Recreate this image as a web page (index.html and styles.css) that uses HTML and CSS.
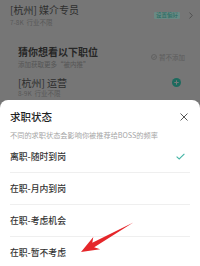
FILE: index.html
```html
<!DOCTYPE html>
<html lang="zh">
<head>
<meta charset="utf-8">
<link rel="stylesheet" href="styles.css">
</head>
<body>
<div class="screen">
  <div class="top">
    <div class="job">
      <div class="job-main">
        <div class="job-title">[杭州] 媒介专员</div>
        <div class="job-sub">7-8K&nbsp; 行业不限</div>
      </div>
      <span class="badge">设置偏好</span>
      <svg class="chev" width="4" height="7" viewBox="0 0 4 7"><polyline points="0.5,0.5 3.3,3.5 0.5,6.5" fill="none" stroke="#4e4e4e" stroke-width="0.9"/></svg>
    </div>
    <div class="guess">
      <div class="guess-head">
        <div>
          <div class="guess-title">猜你想看以下职位</div>
          <div class="guess-sub">添加获取更多“被内推”</div>
        </div>
        <div class="skip">
          <svg width="6" height="6" viewBox="0 0 6 6"><circle cx="3" cy="3" r="2.5" fill="none" stroke="#5a5a5a" stroke-width="0.7"/><polyline points="1.7,3.1 2.7,4 4.3,2.1" fill="none" stroke="#5a5a5a" stroke-width="0.7"/></svg>
          <span>暂不添加</span>
        </div>
      </div>
      <div class="rec">
        <div class="rec-title">[杭州] 运营</div>
        <svg class="plus" width="9" height="9" viewBox="0 0 9 9"><circle cx="4.5" cy="4.5" r="4.5" fill="#1d6a5e"/><path d="M4.5 2.3v4.4M2.3 4.5h4.4" stroke="#7a7a7a" stroke-width="1"/></svg>
      </div>
      <div class="rec-sub">8-9K&nbsp; 行业不限</div>
    </div>
  </div>
  <div class="sheet">
    <div class="sheet-head">
      <div class="sheet-title">求职状态</div>
      <svg class="close" width="8" height="8" viewBox="0 0 8 8"><path d="M0.5 0.5L7.5 7.5M7.5 0.5L0.5 7.5" stroke="#444" stroke-width="0.9"/></svg>
    </div>
    <div class="sheet-sub">不同的求职状态会影响你被推荐给BOSS的频率</div>
    <ul class="options">
      <li class="opt">
        <span>离职-随时到岗</span>
        <svg class="check" width="9" height="7" viewBox="0 0 9 7"><polyline points="0.6,3.6 3.2,6 8.4,0.8" fill="none" stroke="#45b5a6" stroke-width="1.1"/></svg>
      </li>
      <li class="opt"><span>在职-月内到岗</span></li>
      <li class="opt"><span>在职-考虑机会</span></li>
      <li class="opt"><span>在职-暂不考虑</span></li>
    </ul>
  </div>
  <svg class="arrow" width="200" height="266" viewBox="0 0 200 266">
    <polygon points="81,252 93.3,237.1 92.3,242.8 133.3,222.6 94.2,247.2 100.1,249.3" fill="#e5262a"/>
  </svg>
</div>
</body>
</html>
```
FILE: styles.css
```css
* { box-sizing: border-box; margin: 0; padding: 0; }
html, body { width: 200px; height: 266px; overflow: hidden; }
body {
  background: #767676;
  font-family: "Noto Sans CJK SC", "Noto Sans", sans-serif;
}
.screen { position: relative; width: 200px; height: 266px; overflow: hidden; }
.top { height: 100px; padding-top: 4px; }
.job { display: flex; align-items: center; padding: 0 7px 0 10px; }
.job-main { flex: 1; }
.job-title { font-size: 10px; line-height: 11px; color: #2e2e2e; }
.job-sub { font-size: 6.5px; line-height: 8px; margin-top: 3px; color: #585858; }
.badge {
  font-size: 5.5px; line-height: 7px; padding: 0 2px;
  background: #6a8984; color: #24695f; border-radius: 1px;
  margin-right: 9px;
}
.chev { display: block; }
.guess { margin-top: 20px; padding: 0 15px 0 18px; }
.guess-head { display: flex; align-items: center; justify-content: space-between; }
.guess-title { font-size: 10px; line-height: 11px; font-weight: 700; color: #262626; }
.guess-sub { font-size: 6.5px; line-height: 8px; margin-top: 2.5px; color: #555; }
.skip { display: flex; align-items: center; gap: 2px; font-size: 6.5px; line-height: 8px; color: #5c5c5c; margin-top: 1px; }
.skip svg { display: block; }
.rec { display: flex; align-items: center; justify-content: space-between; margin-top: 9px; padding-right: 4px; }
.rec-title { font-size: 10px; line-height: 11px; color: #2e2e2e; }
.plus { display: block; }
.rec-sub { font-size: 6.5px; line-height: 8px; margin-top: 1.5px; color: #585858; }
.sheet {
  background: #fff; border-radius: 8px 8px 0 0;
  height: 166px; padding: 10px 10px 0;
}
.sheet-head { display: flex; align-items: center; justify-content: space-between; padding-right: 2px; }
.sheet-title { font-size: 10.5px; line-height: 14px; color: #222; font-weight: 500; }
.close { display: block; }
.sheet-sub { font-size: 7.2px; line-height: 10px; margin-top: 6px; color: #a5a5a5; white-space: nowrap; }
.options { list-style: none; margin-top: 1px; }
.opt {
  display: flex; align-items: center; justify-content: space-between;
  height: 32px; border-bottom: 1px solid #efefef;
  font-size: 8.8px; color: #333; font-weight: 500; padding-right: 5px;
}
.check { display: block; }
.arrow { position: absolute; left: 0; top: 0; pointer-events: none; }
```
